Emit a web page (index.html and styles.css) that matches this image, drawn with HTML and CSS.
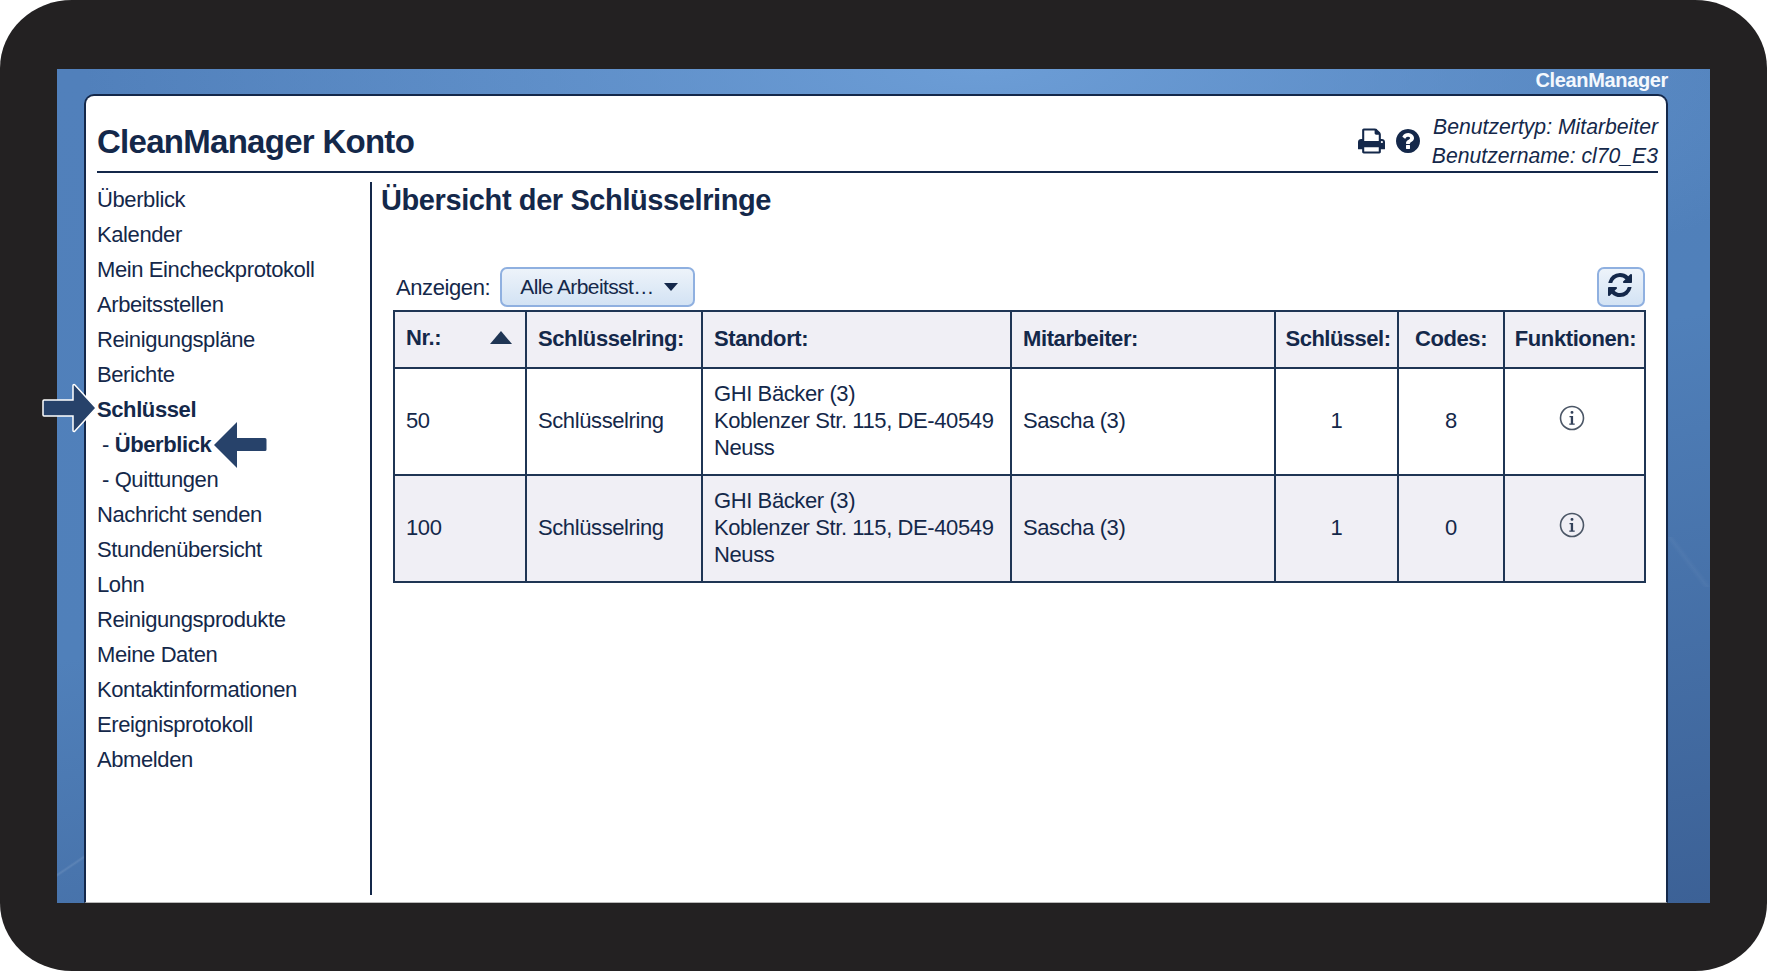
FILE: index.html
```html
<!DOCTYPE html>
<html lang="de">
<head>
<meta charset="utf-8">
<title>CleanManager Konto</title>
<link rel="stylesheet" href="styles.css">
</head>
<body>
<div class="frame">
  <div class="screen">
    <div class="brand">CleanManager</div>
    <div class="card">
      <header class="head">
        <h1 class="title">CleanManager Konto</h1>
        <div class="tools">
          <svg class="tool-icon print" viewBox="64 128 1664 1536"><path d="M448 1536h896v-256h-896v256zm0-640h896v-384h-160q-40 0-68-28t-28-68v-160h-640v640zm1152 64q0-26-19-45t-45-19-45 19-19 45 19 45 45 19 45-19 19-45zm128 0v416q0 13-9.5 22.5t-22.5 9.5h-224v160q0 40-28 68t-68 28h-960q-40 0-68-28t-28-68v-160h-224q-13 0-22.5-9.5t-9.5-22.5v-416q0-79 56.5-135.5t135.5-56.5h64v-544q0-40 28-68t68-28h672q40 0 88 20t76 48l152 152q28 28 48 76t20 88v256h64q79 0 135.5 56.5t56.5 135.5z"/></svg>
          <svg class="tool-icon help" viewBox="128 128 1536 1536"><path d="M1024 1376v-192q0-14-9-23t-23-9h-192q-14 0-23 9t-9 23v192q0 14 9 23t23 9h192q14 0 23-9t9-23zm256-672q0-88-55.5-163t-138.5-116-170-41q-243 0-371 213-15 24 8 42l132 100q7 6 19 6 16 0 25-12 53-68 86-92 34-24 86-24 48 0 85.5 26t37.5 59q0 38-20 61t-68 45q-63 28-115.5 86.5t-52.5 125.5v36q0 14 9 23t23 9h192q14 0 23-9t9-23q0-19 21.5-49.5t54.5-49.5q32-18 49-28.5t46-35 44.5-48 28-60.5 12.5-81zm384 192q0 209-103 385.5t-279.5 279.5-385.5 103-385.5-103-279.5-279.5-103-385.5 103-385.5 279.5-279.5 385.5-103 385.5 103 279.5 279.5 103 385.5z"/></svg>
          <div class="user">
            <div>Benutzertyp: Mitarbeiter</div>
            <div>Benutzername: cl70_E3</div>
          </div>
        </div>
      </header>
      <div class="body">
        <nav class="nav">
          <a>Überblick</a>
          <a>Kalender</a>
          <a>Mein Eincheckprotokoll</a>
          <a>Arbeitsstellen</a>
          <a>Reinigungspläne</a>
          <a>Berichte</a>
          <a class="on">Schlüssel</a>
          <a class="sub">- <b>Überblick</b></a>
          <a class="sub">- Quittungen</a>
          <a>Nachricht senden</a>
          <a>Stundenübersicht</a>
          <a>Lohn</a>
          <a>Reinigungsprodukte</a>
          <a>Meine Daten</a>
          <a>Kontaktinformationen</a>
          <a>Ereignisprotokoll</a>
          <a>Abmelden</a>
        </nav>
        <main class="main">
          <h2 class="heading">Übersicht der Schlüsselringe</h2>
          <div class="toolbar">
            <span class="label">Anzeigen:</span>
            <button class="btn select">Alle Arbeitsst…<span class="caret"></span></button>
            <button class="btn refresh" aria-label="Aktualisieren">
              <svg viewBox="128 128 1536 1536"><path d="M1639 1056q0 5-1 7-64 268-268 434.5t-478 166.5q-146 0-282.5-55t-243.5-157l-129 129q-19 19-45 19t-45-19-19-45v-448q0-26 19-45t45-19h448q26 0 45 19t19 45-19 45l-137 137q71 66 161 102t187 36q134 0 250-65t186-179q11-17 53-117 8-23 30-23h192q13 0 22.5 9.5t9.5 22.5zm25-800v448q0 26-19 45t-45 19h-448q-26 0-45-19t-19-45 19-45l138-138q-148-137-349-137-134 0-250 65t-186 179q-11 17-53 117-8 23-30 23h-199q-13 0-22.5-9.5t-9.5-22.5v-7q65-268 270-434.5t480-166.5q146 0 284 55.5t245 156.5l130-129q19-19 45-19t45 19 19 45z"/></svg>
            </button>
          </div>
          <table class="grid">
            <colgroup>
              <col class="c1"><col class="c2"><col class="c3"><col class="c4"><col class="c5"><col class="c6"><col class="c7">
            </colgroup>
            <thead>
              <tr>
                <th><div class="sort">Nr.:<span class="tri"></span></div></th>
                <th>Schlüsselring:</th>
                <th>Standort:</th>
                <th>Mitarbeiter:</th>
                <th class="mid key">Schlüssel:</th>
                <th class="mid">Codes:</th>
                <th class="mid fn">Funktionen:</th>
              </tr>
            </thead>
            <tbody>
              <tr>
                <td>50</td>
                <td>Schlüsselring</td>
                <td>GHI Bäcker (3)<br>Koblenzer Str. 115, DE-40549<br>Neuss</td>
                <td>Sascha (3)</td>
                <td class="mid">1</td>
                <td class="mid">8</td>
                <td class="mid"><svg class="info" viewBox="0 0 26 26"><circle cx="13" cy="13" r="11.5"/><rect class="dot" x="11.6" y="6" width="2.8" height="2.8" rx="1.2"/><path class="stem" d="M10.5 11h3.6v7.5h1.6v1.2h-5.4v-1.2h1.5v-6.3h-1.3z"/></svg></td>
              </tr>
              <tr class="alt">
                <td>100</td>
                <td>Schlüsselring</td>
                <td>GHI Bäcker (3)<br>Koblenzer Str. 115, DE-40549<br>Neuss</td>
                <td>Sascha (3)</td>
                <td class="mid">1</td>
                <td class="mid">0</td>
                <td class="mid"><svg class="info" viewBox="0 0 26 26"><circle cx="13" cy="13" r="11.5"/><rect class="dot" x="11.6" y="6" width="2.8" height="2.8" rx="1.2"/><path class="stem" d="M10.5 11h3.6v7.5h1.6v1.2h-5.4v-1.2h1.5v-6.3h-1.3z"/></svg></td>
              </tr>
            </tbody>
          </table>
        </main>
      </div>
    </div>
    <svg class="arrow a-right" viewBox="0 0 56 50"><path d="M2 17h29V2.500a1 1 0 0 1 1.700-.7L54 25 32.700 48.200a1 1 0 0 1-1.700-.7V33H2a1 1 0 0 1-1-1V18a1 1 0 0 1 1-1z"/></svg>
    <svg class="arrow a-left" viewBox="0 0 54 48"><path d="M24 1v16h28a1.500 1.500 0 0 1 1.500 1.500v10A1.500 1.500 0 0 1 52 30H24v17L1 24z"/></svg>
  </div>
</div>
</body>
</html>
```
FILE: styles.css
```css
* { box-sizing: border-box; }
html, body { margin: 0; height: 100%; background: #fff; overflow: hidden; }
body { font-family: "Liberation Sans", Arial, sans-serif; color: #14284a; }

.frame {
  width: 1767px;
  height: 971px;
  padding: 69px 57px 68px;
  background: #232122;
  border-radius: 72px / 68px;
}

.screen {
  position: relative;
  height: 834px;
  display: flex;
  flex-direction: column;
  padding: 0 42px 0 27px;
  background:
    linear-gradient(146deg, transparent 33px, rgba(255,255,255,.1) 35px, transparent 37px) 0 100% / 27px 70px no-repeat,
    linear-gradient(53deg, transparent 44%, rgba(255,255,255,.035) 50%, transparent 56%) 100% 468px / 43px 50px no-repeat,
    radial-gradient(ellipse 900px 260px at 56% 0, #6c9dd6 0%, rgba(108,157,214,0) 100%),
    linear-gradient(168deg, #5180bb 0%, #5080ba 50%, #3c6196 100%);
}

.brand {
  height: 25px;
  line-height: 22px;
  text-align: right;
  font-size: 20px;
  font-weight: 700;
  color: #f4f8fd;
  letter-spacing: -0.35px;
}

.card {
  flex: 1;
  display: flex;
  flex-direction: column;
  background: #fff;
  border: 2px solid #14284a;
  border-bottom: 1px solid #b9b9b9;
  border-radius: 10px 10px 0 0;
  padding: 0 8px 0 11px;
}

.head {
  height: 77px;
  border-bottom: 2px solid #14284a;
  display: flex;
  align-items: flex-end;
  justify-content: space-between;
}

.title {
  margin: 0 0 9px;
  font-size: 33px;
  line-height: 40px;
  font-weight: 700;
  letter-spacing: -0.72px;
}

.tools { display: flex; align-items: flex-end; height: 100%; }
.tool-icon { fill: #14284a; display: block; height: 26px; margin-bottom: 17px; }
.print { width: 27px; margin-right: 11px; }
.help { width: 24px; margin-right: 12px; }

.user {
  font-style: italic;
  font-size: 21.2px;
  line-height: 29px;
  text-align: right;
  padding-bottom: 1px;
}

.body { flex: 1; display: flex; padding: 9px 0 7px; }

.nav {
  width: 275px;
  flex: none;
  border-right: 2px solid #14284a;
  display: flex;
  flex-direction: column;
}
.nav a { height: 35px; line-height: 35px; font-size: 22px; white-space: nowrap; letter-spacing: -0.4px; }
.nav .on { font-weight: 700; }
.nav .sub { padding-left: 5px; }

.main { flex: 1; padding-left: 9px; min-width: 0; }

.heading {
  margin: 0;
  height: 70px;
  font-size: 29px;
  line-height: 36px;
  font-weight: 700;
  letter-spacing: -0.4px;
}

.toolbar {
  display: flex;
  align-items: center;
  height: 40px;
  margin: 15px 13px 3px 12px;
  padding-left: 3px;
}
.label { font-size: 22px; margin-right: 10px; letter-spacing: -0.4px; padding-top: 2px; }

.btn {
  height: 40px;
  font: inherit;
  color: inherit;
  border: 2px solid #8fb0e0;
  border-radius: 7px;
  background: linear-gradient(180deg, #edf3fa, #d3e3f4);
  padding: 0;
}
.select {
  width: 195px;
  font-size: 21px;
  letter-spacing: -0.6px;
  display: flex;
  align-items: center;
  padding-left: 18px;
}
.caret {
  margin-left: 10px;
  border-left: 7px solid transparent;
  border-right: 7px solid transparent;
  border-top: 8px solid #14284a;
}
.refresh {
  width: 48px;
  margin-left: auto;
  display: flex;
  align-items: center;
  justify-content: center;
}
.refresh svg { width: 24px; height: 24px; fill: #14284a; margin: 0 2px 4px 0; }

.grid {
  table-layout: fixed;
  width: 1251px;
  margin-left: 12px;
  border-collapse: collapse;
  font-size: 22px;
  line-height: 27px;
  letter-spacing: -0.4px;
}
.c1 { width: 132px; }
.c2 { width: 176px; }
.c3 { width: 309px; }
.c4 { width: 264px; }
.c5 { width: 123px; }
.c6 { width: 106px; }
.c7 { width: 141px; }

.grid th, .grid td {
  border: 2px solid #1f3554;
  padding: 0 11px;
  text-align: left;
  white-space: nowrap;
}
.grid th { height: 57px; background: #f0eff5; font-weight: 700; padding-bottom: 2px; }
.grid td { height: 107px; padding-bottom: 2px; }
.grid .alt td { background: #f0eff5; }
.grid .mid { text-align: center; padding-left: 0; padding-right: 0; }
.grid .key { padding-left: 3px; letter-spacing: -0.5px; }
.grid .fn { padding-left: 2px; }

.sort { display: flex; justify-content: space-between; align-items: center; padding-bottom: 2px; }
.tri {
  border-left: 11px solid transparent;
  border-right: 11px solid transparent;
  border-bottom: 13px solid #1f3554;
  margin-right: 2px;
}

.info { width: 26px; height: 26px; display: block; margin: -5px 0 0 54px; }
.info circle { fill: none; stroke: #4b5666; stroke-width: 1.6; }
.info .dot, .info .stem { fill: #33415a; }

.arrow { position: absolute; overflow: visible; }
.arrow path { fill: #27426a; }
.a-right { left: -15px; top: 314px; width: 56px; height: 50px; }
.a-right path { stroke: #fff; stroke-width: 1.5; }
.a-left { left: 156px; top: 352px; width: 54px; height: 48px; }
```
